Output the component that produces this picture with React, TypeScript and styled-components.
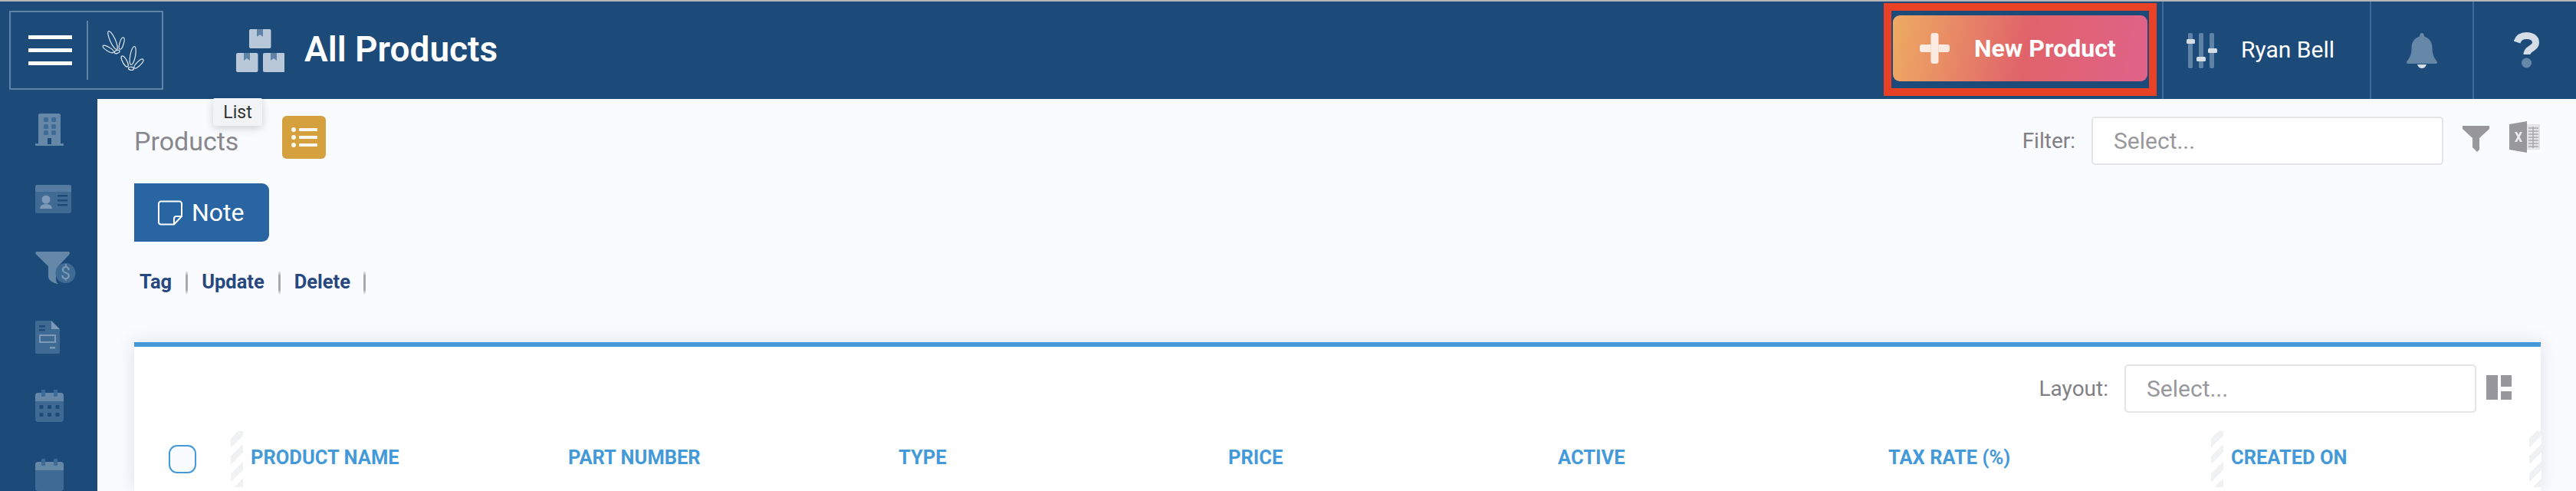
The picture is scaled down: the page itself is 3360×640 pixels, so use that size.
import React from 'react';
import styled, { createGlobalStyle } from 'styled-components';

const GlobalStyle = createGlobalStyle`
  html, body {
    margin: 0;
    padding: 0;
    background: #fafbff;
    overflow: hidden;
  }
  * { box-sizing: border-box; }
`;

const Page = styled.div`
  width: 3360px;
  height: 640px;
  overflow: hidden;
  display: flex;
  flex-direction: column;
  font-family: Roboto, sans-serif;
  background: #fafbff;
`;

// Top bar
const TopBar = styled.header`
  height: 129px;
  flex: none;
  display: flex;
  align-items: center;
  background: #1c4b7a;
  border-top: 2px solid #b4b6b8;
`;

const LogoBox = styled.div`
  width: 201px;
  height: 103px;
  margin-left: 12px;
  border: 2px solid #5f83a6;
  display: flex;
  align-items: center;
  padding-left: 23px;
`;

const Burger = styled.div`
  width: 57px;
  height: 39px;
  display: flex;
  flex-direction: column;
  justify-content: space-between;
`;

const BurgerBar = styled.span`
  display: block;
  height: 5px;
  background: #fff;
`;

const LogoDivider = styled.div`
  width: 2px;
  height: 77px;
  margin: 0 18px 0 19px;
  background: #5f83a6;
`;

const BoxesIcon = styled.svg`
  width: 63px;
  height: 56px;
  margin-left: 95px;
  margin-right: 26px;
  flex: none;
`;

const Title = styled.h1`
  margin: -3px 0 0;
  font-size: 46px;
  font-weight: 600;
  color: #fff;
`;

const Spacer = styled.div`
  flex: 1;
`;

const RedFrame = styled.div`
  width: 356px;
  height: 121px;
  margin-right: 7px;
  align-self: flex-start;
  margin-top: 2px;
  border: 10px solid #e94125;
  padding: 6px 2px 9px;
`;

const NewButton = styled.button`
  width: 100%;
  height: 100%;
  border: none;
  border-radius: 9px;
  padding: 0 0 0 35px;
  display: flex;
  align-items: center;
  gap: 32px;
  font-family: inherit;
  font-size: 32px;
  font-weight: 700;
  color: #fff;
  background: linear-gradient(100deg, #eeab62 0%, #e0636a 52%, #e0628a 100%);
`;

const HeadCell = styled.div<{ $width: number; $shift?: number }>`
  width: ${p => p.$width}px;
  height: 100%;
  flex: none;
  display: flex;
  align-items: center;
  justify-content: ${p => (p.$width > 200 ? 'flex-start' : 'center')};
  border-left: 2px solid #3f6a94;
  padding-left: ${p => (p.$width > 200 ? 30 : p.$shift || 0)}px;
  color: #fff;
  font-size: 30px;
`;

const UserName = styled.span`
  margin-left: 31px;
  margin-top: -2px;
`;

// Body
const Body = styled.div`
  flex: 1;
  display: flex;
  min-height: 0;
`;

const Sidebar = styled.nav`
  width: 127px;
  flex: none;
  background: #1c4b7a;
  padding: 19px 0 0 46px;
  display: grid;
  grid-auto-rows: 42px;
  row-gap: 48px;
  align-items: center;
  justify-items: start;
`;

const Main = styled.main`
  flex: 1;
  min-width: 0;
  padding: 22px 46px 0 48px;
  display: flex;
  flex-direction: column;
  position: relative;
`;

const Tooltip = styled.div`
  position: absolute;
  left: 151px;
  top: -1px;
  width: 64px;
  height: 36px;
  display: flex;
  align-items: center;
  justify-content: center;
  background: #f2f3f5;
  border-radius: 2px;
  box-shadow: 0 3px 12px rgba(0, 0, 0, 0.18);
  font-size: 23px;
  color: #333;
`;

const TitleRow = styled.div`
  height: 64px;
  display: flex;
  align-items: flex-start;
`;

const PageTitle = styled.h2`
  margin: 16px 0 0;
  font-size: 34px;
  line-height: 35px;
  font-weight: 400;
  color: #88888c;
`;

const ListButton = styled.div`
  width: 57px;
  height: 56px;
  margin-left: 57px;
  border-radius: 6px;
  background: #d4a13e;
  display: flex;
  align-items: center;
  justify-content: center;
`;

const FilterArea = styled.div`
  margin-left: auto;
  display: flex;
  align-items: center;
  height: 64px;
`;

const FieldLabel = styled.span`
  font-size: 28px;
  font-weight: 400;
  color: #808084;
  margin-right: 21px;
`;

const SelectBox = styled.div`
  width: 459px;
  height: 63px;
  background: #fff;
  border: 2px solid #e4e4e6;
  border-radius: 5px;
  padding-left: 27px;
  display: flex;
  align-items: center;
  font-size: 30px;
  font-weight: 400;
  color: #98989c;
`;

const FunnelIcon = styled.svg`
  width: 35px;
  height: 34px;
  margin-left: 25px;
  margin-top: -4px;
  filter: blur(0.7px);
`;

const ExcelIcon = styled.svg`
  width: 41px;
  height: 41px;
  margin-left: 26px;
  margin-top: -10px;
  filter: blur(0.7px);
`;

const NoteButton = styled.button`
  width: 176px;
  height: 76px;
  margin-top: 24px;
  border: none;
  border-radius: 0 9px 9px 0;
  background: #2a65a3;
  color: #fff;
  display: flex;
  align-items: center;
  padding: 0 0 0 31px;
  gap: 12px;
  font-family: inherit;
  font-size: 32px;
  font-weight: 400;
`;

const ActionRow = styled.div`
  height: 31px;
  margin-top: 38px;
  padding-left: 7px;
  display: flex;
  align-items: flex-start;
`;

const ActionLink = styled.a`
  font-size: 25.5px;
  line-height: 29px;
  font-weight: 700;
  color: #26487f;
`;

const ActionSep = styled.span<{ $gap: number }>`
  width: 3px;
  height: 31px;
  margin: 0 ${p => p.$gap}px;
  background: linear-gradient(#fafbff, #a9a9ac 20%, #a9a9ac 80%, #fafbff);
`;

const Card = styled.section`
  flex: 1;
  margin-top: 62px;
  background: #fff;
  border-top: 6px solid #4499d9;
  box-shadow: 0 0 22px rgba(30, 40, 90, 0.12);
  display: flex;
  flex-direction: column;
`;

const LayoutRow = styled.div`
  height: 63px;
  margin-top: 23px;
  padding-right: 38px;
  display: flex;
  align-items: center;
  justify-content: flex-end;
`;

const LayoutIcon = styled.svg`
  width: 33px;
  height: 32px;
  margin-left: 13px;
  margin-top: -4px;
  filter: blur(0.5px);
`;

const ColumnRow = styled.div`
  height: 73px;
  margin-top: 24px;
  display: grid;
  grid-template-columns: 126px 440px 431px 430px 430px 431px 421px 415px 15px;
`;

const CheckCell = styled.div`
  padding: 18px 0 0 45px;
`;

const CheckBox = styled.div`
  width: 36px;
  height: 37px;
  border: 2px solid #4499d9;
  border-radius: 11px;
  background: #fafbff;
`;

const Column = styled.div<{ $handle?: boolean }>`
  display: flex;
  align-items: flex-start;
  gap: 10px;
  padding-top: ${p => (p.$handle ? 0 : 20)}px;
  font-size: 25.5px;
  line-height: 29px;
  font-weight: 700;
  color: #4499d9;
  white-space: nowrap;
  & > span { margin-top: ${p => (p.$handle ? 20 : 0)}px; }
`;

const Handle = styled.i`
  display: block;
  width: 16px;
  height: 73px;
  flex: none;
  background: repeating-linear-gradient(-45deg, #f0f1f3 0 8px, #fff 8px 16px);
`;

const LeafLogo = () => (
  <svg width="56" height="56" viewBox="132 37 56 56" fill="none" stroke="#dde5ee" strokeWidth="1.2">
    <ellipse cx="151.7" cy="66.5" rx="3.5" ry="2" transform="rotate(-20 151.7 66.5)" />
    <ellipse cx="146" cy="51.5" rx="3.4" ry="13" transform="rotate(-24.6 146 51.5)" />
    <ellipse cx="157.7" cy="55.5" rx="2.6" ry="8" transform="rotate(16.7 157.7 55.5)" />
    <ellipse cx="140.2" cy="63" rx="8" ry="2.5" transform="rotate(30.6 140.2 63)" />
    <ellipse cx="170" cy="88.3" rx="3.5" ry="2" transform="rotate(5 170 88.3)" />
    <ellipse cx="172.2" cy="71.5" rx="3.4" ry="12.2" transform="rotate(10.6 172.2 71.5)" />
    <ellipse cx="161.7" cy="79" rx="2.8" ry="7.9" transform="rotate(-29 161.7 79)" />
    <ellipse cx="180" cy="82" rx="2.6" ry="8" transform="rotate(45 180 82)" />
  </svg>
);

const Box = ({ x, y }: { x: number; y: number }) => (
  <g>
    <rect x={x} y={y} width="28.5" height="25" rx="2" fill="#b9c8d8" />
    <path d={`M${x + 10} ${y} h8 v10 l-4 -3 l-4 3 z`} fill="#5f83a6" />
  </g>
);

const Boxes = () => (
  <BoxesIcon viewBox="0 0 63 56">
    <Box x={17} y={0} />
    <Box x={0} y={31} />
    <Box x={35} y={31} />
  </BoxesIcon>
);

const PlusIcon = () => (
  <svg width="39" height="40" viewBox="0 0 39 40" style={{ flex: 'none' }}>
    <rect x="14.5" y="0" width="10" height="40" rx="3" fill="#fff" fillOpacity="0.82" />
    <path d="M3 15h11.5v10H3a3 3 0 0 1-3-3v-4a3 3 0 0 1 3-3zM24.5 15H36a3 3 0 0 1 3 3v4a3 3 0 0 1-3 3H24.5z" fill="#fff" fillOpacity="0.82" />
  </svg>
);

const SlidersIcon = () => (
  <svg width="40" height="46" viewBox="0 0 40 46">
    <rect x="2" y="0" width="6" height="46" rx="2" fill="#5f83a6" />
    <rect x="16" y="0" width="6" height="46" rx="2" fill="#5f83a6" />
    <rect x="30" y="0" width="6" height="46" rx="2" fill="#5f83a6" />
    <rect x="0" y="8" width="11" height="6" rx="1.5" fill="#d5dde6" />
    <rect x="13" y="31" width="12" height="6" rx="1.5" fill="#d5dde6" />
    <rect x="28" y="20" width="12" height="6" rx="1.5" fill="#d5dde6" />
  </svg>
);

const BellIcon = () => (
  <svg width="40" height="46" viewBox="0 0 40 46">
    <path d="M20 0c2 0 3 2 3 4.500c7 2 10.500 8 10.500 15c0 8 2 12 6 17.500c.7 1 .5 3-1 3H1.500c-1.500 0-1.700-2-1-3c4-5.500 6-9.500 6-17.500c0-7 3.500-13 10.500-15C17 2 18 0 20 0z" fill="#6588a9" />
    <path d="M14 41h12c-.8 3-3 5-6 5s-5.200-2-6-5z" fill="#d5dde6" />
  </svg>
);

const HelpIcon = () => (
  <svg width="33" height="47" viewBox="0 0 33 47">
    <path d="M4 13C6 7 11 4.500 16.500 4.500C23.500 4.500 28.500 8 28.500 13.500C28.500 19.500 22.500 20.500 19.500 23.500C17.500 25.500 17 27 17 29" fill="none" stroke="#d5dde6" strokeWidth="9" />
    <circle cx="16.500" cy="40" r="6.500" fill="#6588a9" />
  </svg>
);

const ListGlyph = () => (
  <svg width="34" height="26" viewBox="0 0 34 26" fill="#fff" fillOpacity="0.92">
    <circle cx="3" cy="3" r="3" />
    <circle cx="3" cy="13" r="3" />
    <circle cx="3" cy="23" r="3" />
    <rect x="10" y="1" width="24" height="4" rx="1" />
    <rect x="10" y="11" width="24" height="4" rx="1" />
    <rect x="10" y="21" width="24" height="4" rx="1" />
  </svg>
);

const NoteGlyph = () => (
  <svg width="32" height="33" viewBox="0 0 32 33" fill="none" stroke="#fff" strokeWidth="2" style={{ flex: 'none' }}>
    <path d="M21 31.500H4a3 3 0 0 1-3-3V4.500a3 3 0 0 1 3-3h24a3 3 0 0 1 3 3V21z" />
    <path d="M21 31.500V24a3 3 0 0 1 3-3h7" />
  </svg>
);

const BuildingIcon = () => (
  <svg width="37" height="42" viewBox="0 0 37 42">
    <path d="M4 2a2 2 0 0 1 2-2h25a2 2 0 0 1 2 2v38H4z" fill="#6588a9" />
    <rect x="0" y="39" width="37" height="3" rx="1" fill="#6588a9" />
    <g fill="#3f6a94">
      <rect x="11" y="5" width="6" height="6" rx="1.500" />
      <rect x="21" y="5" width="6" height="6" rx="1.500" />
      <rect x="11" y="14" width="6" height="6" rx="1.500" />
      <rect x="21" y="14" width="6" height="6" rx="1.500" />
      <rect x="11" y="22" width="6" height="6" rx="1.500" />
      <rect x="21" y="22" width="6" height="6" rx="1.500" />
    </g>
    <rect x="16" y="32" width="5" height="8" fill="#1c4b7a" />
  </svg>
);

const CardIcon = () => (
  <svg width="47" height="37" viewBox="0 0 47 37">
    <rect width="47" height="37" rx="3" fill="#3f6a94" />
    <path d="M0 9V3a3 3 0 0 1 3-3h41a3 3 0 0 1 3 3v6z" fill="#567ba0" />
    <circle cx="14" cy="19" r="5.500" fill="#7c9ab7" />
    <path d="M6 31c0-4 4-6 8-6s8 2 8 6z" fill="#7c9ab7" />
    <rect x="29" y="13" width="13" height="2.500" fill="#1c4b7a" />
    <rect x="29" y="19" width="13" height="2.500" fill="#1c4b7a" />
    <rect x="29" y="25" width="13" height="2.500" fill="#1c4b7a" />
  </svg>
);

const FunnelDollarIcon = () => (
  <svg width="53" height="42" viewBox="0 0 53 42">
    <path d="M2 0h41c2 0 2.500 2 1.500 3.500L30 19c-1.500 2-3 4-3 7v10c0 3 1 5 3 6c-4 0-13-4-13-9V19L1 3.500C0 2 0 0 2 0z" fill="#6588a9" />
    <circle cx="39.500" cy="28" r="13" fill="#3f6a94" />
    <text x="39.500" y="36" textAnchor="middle" fontFamily="Roboto, sans-serif" fontSize="23" fill="#7c9ab7">$</text>
  </svg>
);

const DocIcon = () => (
  <svg width="32" height="43" viewBox="0 0 32 43">
    <path d="M2 0h19v11h11v30a2 2 0 0 1-2 2H2a2 2 0 0 1-2-2V2a2 2 0 0 1 2-2z" fill="#3f6a94" />
    <path d="M21 0l11 11H21z" fill="#7c9ab7" />
    <rect x="5" y="6" width="8" height="2.500" fill="#1c4b7a" />
    <rect x="5" y="11" width="8" height="2.500" fill="#1c4b7a" />
    <rect x="6" y="19" width="20" height="9" fill="none" stroke="#7c9ab7" strokeWidth="2" />
    <rect x="19" y="34" width="7" height="2.500" fill="#7c9ab7" />
  </svg>
);

const CalendarIcon = ({ dots }: { dots?: boolean }) => (
  <svg width="37" height="42" viewBox="0 0 37 42">
    <rect x="0" y="4" width="37" height="38" rx="4" fill="#3f6a94" />
    <path d="M0 15V8a4 4 0 0 1 4-4h29a4 4 0 0 1 4 4v7z" fill="#6588a9" />
    <rect x="8" y="0" width="5" height="9" rx="1" fill="#3f6a94" />
    <rect x="24" y="0" width="5" height="9" rx="1" fill="#3f6a94" />
    {dots && (
      <g fill="#1c4b7a">
        {[8, 18.500, 29].map(x => (
          <React.Fragment key={x}>
            <rect x={x - 2.500} y="20" width="5" height="5" rx="1" />
            <rect x={x - 2.500} y="30" width="5" height="5" rx="1" />
          </React.Fragment>
        ))}
      </g>
    )}
  </svg>
);

const columns = ['PART NUMBER', 'TYPE', 'PRICE', 'ACTIVE', 'TAX RATE (%)'];

const App = () => {
  return (
    <Page>
      <GlobalStyle />
      <TopBar>
        <LogoBox>
          <Burger>
            <BurgerBar />
            <BurgerBar />
            <BurgerBar />
          </Burger>
          <LogoDivider />
          <LeafLogo />
        </LogoBox>
        <Boxes />
        <Title>All Products</Title>
        <Spacer />
        <RedFrame>
          <NewButton>
            <PlusIcon />
            New Product
          </NewButton>
        </RedFrame>
        <HeadCell $width={271}>
          <SlidersIcon />
          <UserName>Ryan Bell</UserName>
        </HeadCell>
        <HeadCell $width={134}>
          <BellIcon />
        </HeadCell>
        <HeadCell $width={135} $shift={4}>
          <HelpIcon />
        </HeadCell>
      </TopBar>
      <Body>
        <Sidebar>
          <BuildingIcon />
          <CardIcon />
          <FunnelDollarIcon />
          <DocIcon />
          <CalendarIcon dots />
          <CalendarIcon />
        </Sidebar>
        <Main>
          <Tooltip>List</Tooltip>
          <TitleRow>
            <PageTitle>Products</PageTitle>
            <ListButton>
              <ListGlyph />
            </ListButton>
            <FilterArea>
              <FieldLabel>Filter:</FieldLabel>
              <SelectBox>Select...</SelectBox>
              <FunnelIcon viewBox="0 0 35 34">
                <path d="M0 0h35v4L22 16v15l-3 3-6-6V16L0 4z" fill="#98989c" />
              </FunnelIcon>
              <ExcelIcon viewBox="0 0 41 41">
                <path d="M23 4h17v33H23z" fill="#e4e4e6" />
                <path d="M25 9h13M25 13h13M25 17h13M25 21h13M25 25h13M25 29h13M25 33h13M31 7v28" stroke="#a8a8ac" strokeWidth="1.500" />
                <path d="M0 4L23 0v41L0 37z" fill="#98989c" />
                <path d="M7 14h3l2 4 2-4h3l-3.500 6.500L17 27h-3l-2-4-2 4H7l3.500-6.500z" fill="#eeeef0" />
              </ExcelIcon>
            </FilterArea>
          </TitleRow>
          <NoteButton>
            <NoteGlyph />
            Note
          </NoteButton>
          <ActionRow>
            <ActionLink>Tag</ActionLink>
            <ActionSep $gap={18} />
            <ActionLink>Update</ActionLink>
            <ActionSep $gap={18} />
            <ActionLink>Delete</ActionLink>
            <ActionSep $gap={17} />
          </ActionRow>
          <Card>
            <LayoutRow>
              <FieldLabel>Layout:</FieldLabel>
              <SelectBox>Select...</SelectBox>
              <LayoutIcon viewBox="0 0 33 32">
                <path d="M0 0h15v32H0zM19 0h14v15H19zM19 21h14v11H19z" fill="#98989c" />
              </LayoutIcon>
            </LayoutRow>
            <ColumnRow>
              <CheckCell>
                <CheckBox />
              </CheckCell>
              <Column $handle>
                <Handle />
                <span>PRODUCT NAME</span>
              </Column>
              {columns.map(name => (
                <Column key={name}>{name}</Column>
              ))}
              <Column $handle>
                <Handle />
                <span>CREATED ON</span>
              </Column>
              <Handle />
            </ColumnRow>
          </Card>
        </Main>
      </Body>
    </Page>
  );
};

export default App;
